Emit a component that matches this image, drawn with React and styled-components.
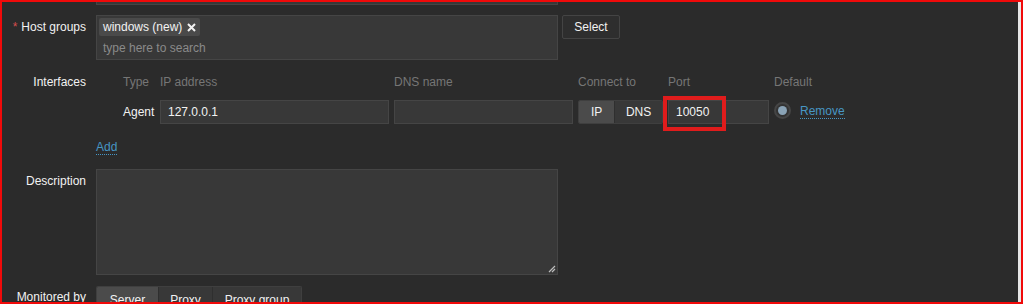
import React from "react";
import styled, { createGlobalStyle } from "styled-components";

const Global = createGlobalStyle`
  html, body { margin: 0; padding: 0; background: #ffffff; }
  body { font-family: "Liberation Sans", Arial, sans-serif; font-size: 12px; }
`;

const Frame = styled.div`
  box-sizing: border-box;
  width: 1023px;
  height: 304px;
  border: 2px solid #f00a0a;
  background: #2b2b2b;
  display: flex;
  overflow: hidden;
`;

const Page = styled.div`
  flex: 1;
  overflow: hidden;
  color: #f2f2f2;
`;

const ScrollStrip = styled.div`
  width: 3px;
  background: #e6e6e6;
`;

const Row = styled.div`
  display: flex;
  align-items: flex-start;
  margin-top: ${(p) => p.$gap}px;
`;

const Label = styled.div`
  width: 84px;
  flex: none;
  text-align: right;
  line-height: 14px;
  padding-top: ${(p) => p.$pt ?? 5}px;
  margin-right: 10px;
  color: #f2f2f2;
  white-space: nowrap;
`;

const Asterisk = styled.span`
  color: #d64e4e;
  margin-right: 4px;
`;

const Box = styled.div`
  box-sizing: border-box;
  width: ${(p) => p.$w}px;
  height: ${(p) => p.$h}px;
  background: #383838;
  border: 1px solid #454545;
  position: relative;
`;

const Multi = styled(Box)`
  padding: 2px 2px 0 2px;
`;

const Tag = styled.span`
  display: inline-flex;
  align-items: center;
  height: 18px;
  padding: 0 4px 0 4px;
  background: #4a4a4a;
  border-radius: 2px;
  line-height: 18px;
  color: #f2f2f2;
  gap: 5px;
`;

const Placeholder = styled.div`
  color: #8a8a8a;
  line-height: 14px;
  margin-top: 5px;
  padding-left: 4px;
`;

const Button = styled.div`
  box-sizing: border-box;
  width: 58px;
  height: 24px;
  margin-left: 4px;
  border: 1px solid #444;
  background: #2e2e2e;
  border-radius: 2px;
  display: flex;
  align-items: center;
  justify-content: center;
  color: #f2f2f2;
`;

const Content = styled.div`
  display: flex;
  flex-direction: column;
  align-items: flex-start;
  padding-top: ${(p) => p.$pt ?? 0}px;
`;

const Table = styled.div`
  display: grid;
  grid-template-columns: 32px 229px 179px 85px 101px 21px auto;
  column-gap: 5px;
  row-gap: 11px;
  padding-left: 27px;
  align-items: center;
`;

const Head = styled.div`
  color: #767676;
  line-height: 14px;
  white-space: nowrap;
  grid-column: ${(p) => p.$span || "auto"};
`;

const CellText = styled.div`
  color: #f2f2f2;
  white-space: nowrap;
`;

const Input = styled.div`
  box-sizing: border-box;
  height: 24px;
  background: #383838;
  border: 1px solid #454545;
  display: flex;
  align-items: center;
  padding: 0 7px;
  color: #f2f2f2;
  position: relative;
`;

const Segments = styled.div`
  display: flex;
  height: 24px;
  border: 1px solid #3f3f3f;
  box-sizing: border-box;
  border-radius: 2px;
  overflow: hidden;
`;

const Segment = styled.div`
  box-sizing: border-box;
  width: ${(p) => p.$w}px;
  display: flex;
  align-items: center;
  justify-content: center;
  background: ${(p) => (p.$active ? "#4b4b4b" : "#383838")};
  color: #f2f2f2;
  border-left: ${(p) => (p.$first ? "none" : "1px solid #2f2f2f")};
`;

const Highlight = styled.div`
  position: absolute;
  left: -6px;
  top: -5px;
  width: 63px;
  height: 35px;
  box-sizing: border-box;
  border: 4px solid #e01c1c;
  pointer-events: none;
`;

const Radio = styled.div`
  box-sizing: border-box;
  width: 17px;
  height: 17px;
  border-radius: 50%;
  border: 2px solid #454545;
  background: #333333;
  display: flex;
  align-items: center;
  justify-content: center;
  margin-top: -4px;
  &::after {
    content: "";
    width: 9px;
    height: 9px;
    border-radius: 50%;
    background: #8aa3b6;
  }
`;

const Link = styled.span`
  color: #4796c4;
  border-bottom: 1px dotted #4796c4;
  line-height: 13px;
`;

const AddLink = styled(Link)`
  margin-top: 17px;
`;

const Textarea = styled(Box)``;

const Grip = styled.svg`
  position: absolute;
  right: 1px;
  bottom: 1px;
`;

const SegBig = styled(Segments)`
  height: 26px;
  border-bottom: none;
`;

function XIcon() {
  return (
    <svg width="9" height="9" viewBox="0 0 9 9">
      <path d="M1 1 L8 8 M8 1 L1 8" stroke="#f2f2f2" strokeWidth="2" strokeLinecap="butt" />
    </svg>
  );
}

export default function App() {
  return (
    <>
      <Global />
      <Frame>
        <Page>
          <Row $gap={-21}>
            <Label />
            <Box $w={462} $h={24} />
          </Row>

          <Row $gap={10}>
            <Label>
              <Asterisk>*</Asterisk>Host groups
            </Label>
            <Multi $w={462} $h={45}>
              <Tag>
                windows (new) <XIcon />
              </Tag>
              <Placeholder>type here to search</Placeholder>
            </Multi>
            <Button>Select</Button>
          </Row>

          <Row $gap={10}>
            <Label $pt={5}>Interfaces</Label>
            <Content $pt={5}>
              <Table>
                <Head>Type</Head>
                <Head>IP address</Head>
                <Head>DNS name</Head>
                <Head>Connect to</Head>
                <Head>Port</Head>
                <Head $span="span 2">Default</Head>

                <CellText>Agent</CellText>
                <Input>127.0.0.1</Input>
                <Input />
                <Segments>
                  <Segment $w={36} $active $first>IP</Segment>
                  <Segment $w={49}>DNS</Segment>
                </Segments>
                <Input>
                  10050
                  <Highlight />
                </Input>
                <Radio />
                <Link>Remove</Link>
              </Table>
              <AddLink>Add</AddLink>
            </Content>
          </Row>

          <Row $gap={14}>
            <Label>Description</Label>
            <Textarea $w={462} $h={106}>
              <Grip width="8" height="8" viewBox="0 0 8 8">
                <path d="M7 1 L1 7 M7 4 L4 7" stroke="#bdbdbd" strokeWidth="1.2" />
              </Grip>
            </Textarea>
          </Row>

          <Row $gap={11}>
            <Label $pt={4}>Monitored by</Label>
            <SegBig>
              <Segment $w={61} $active $first>Server</Segment>
              <Segment $w={54}>Proxy</Segment>
              <Segment $w={89}>Proxy group</Segment>
            </SegBig>
          </Row>
        </Page>
        <ScrollStrip />
      </Frame>
    </>
  );
}
